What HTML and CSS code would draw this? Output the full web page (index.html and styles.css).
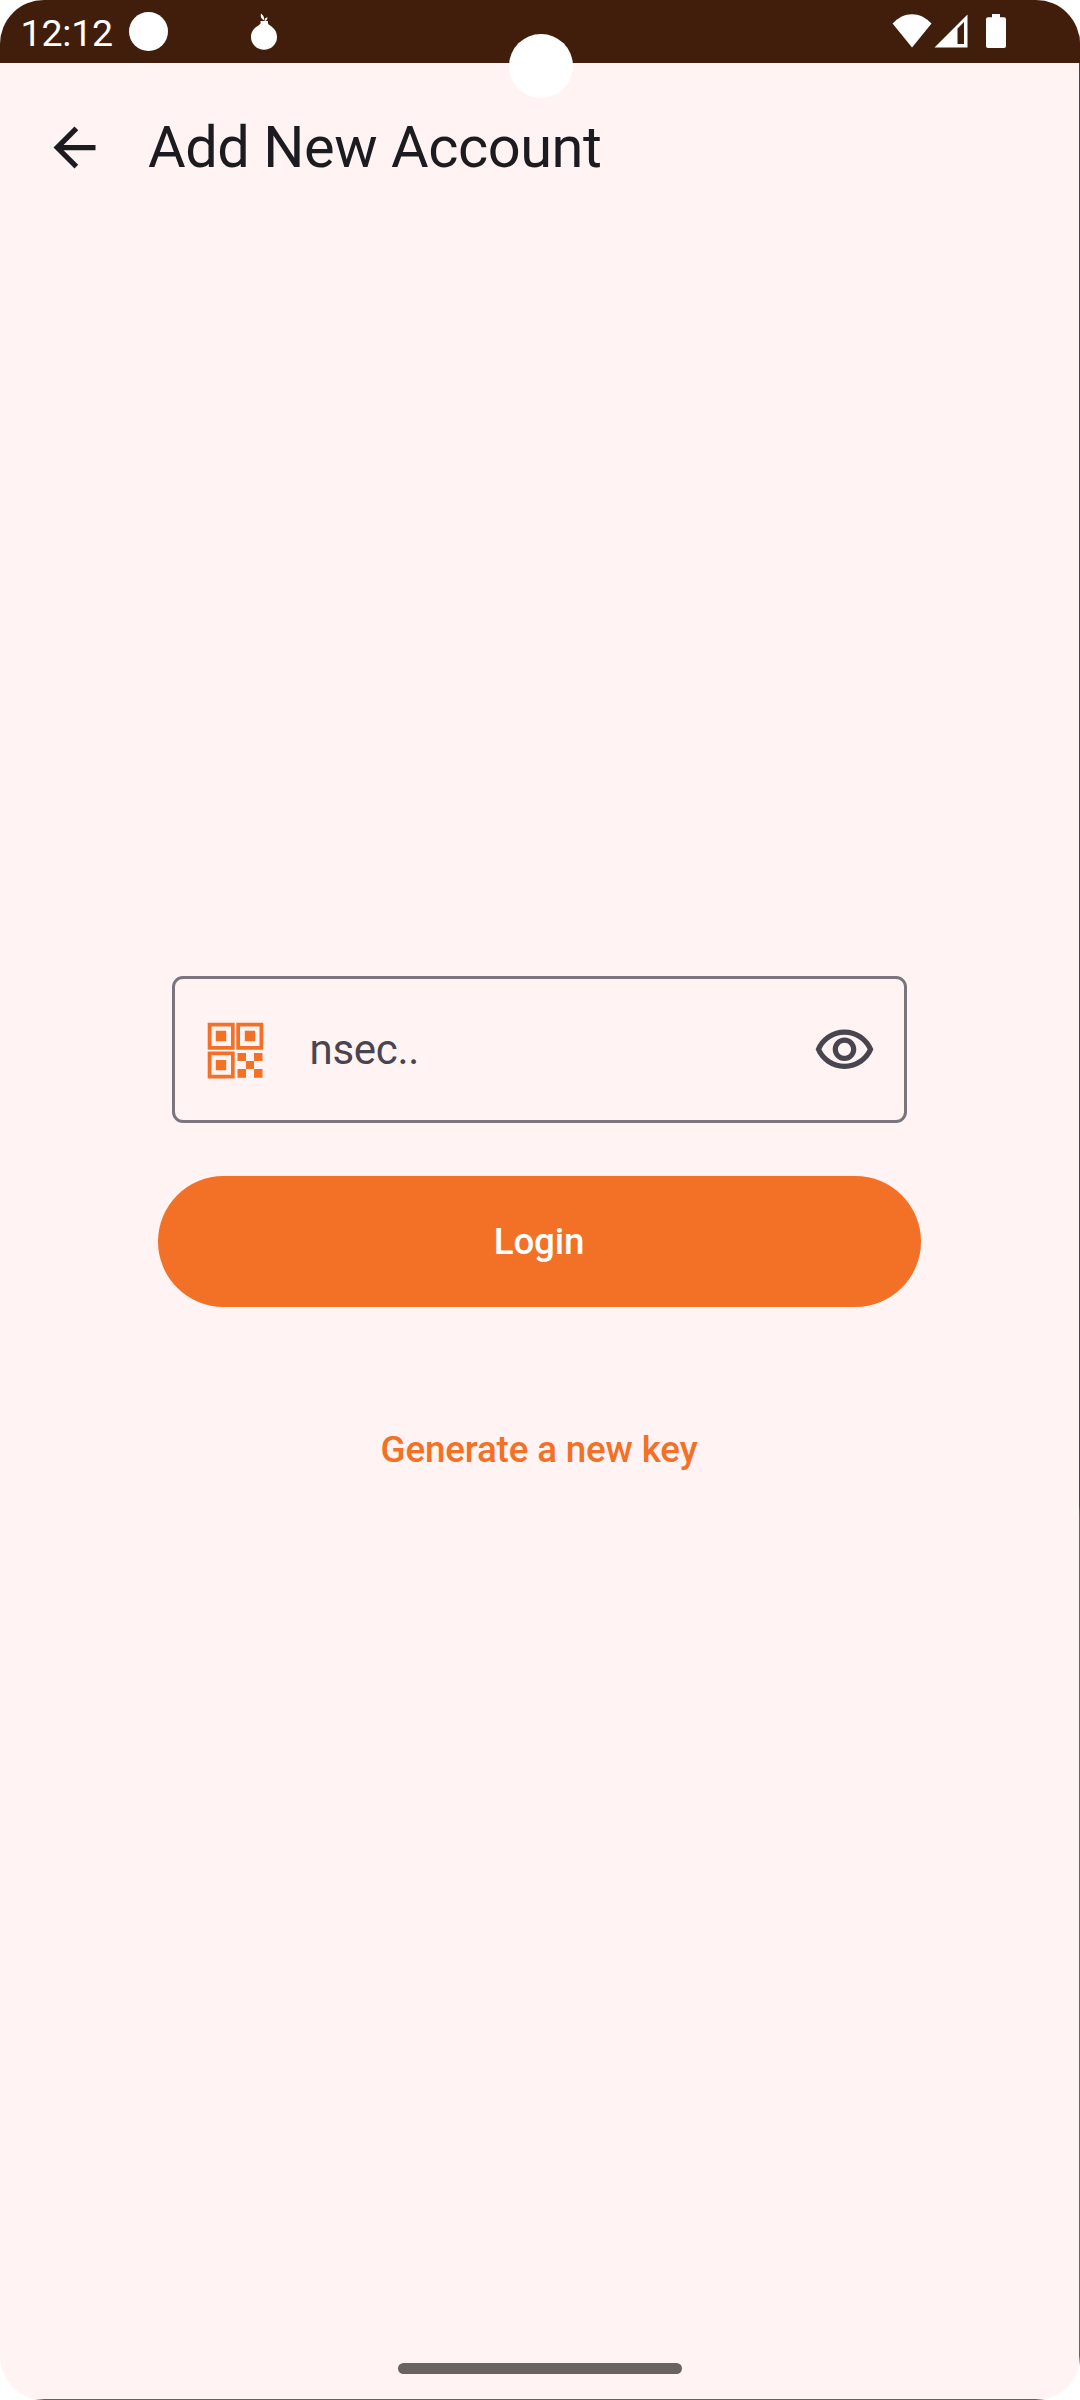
FILE: index.html
```html
<!DOCTYPE html>
<html lang="en">
<head>
<meta charset="utf-8">
<title>Add New Account</title>
<link rel="stylesheet" href="styles.css">
</head>
<body>
<div class="screen">
  <header class="status-bar">
    <span class="clock">12:12</span>
    <span class="status-dot"></span>
    <svg class="status-onion" viewBox="0 0 28 38" width="28" height="38"><path d="M10.500 8H18V10.500C19 13 27 14.500 27 24A13 12.700 0 0 1 1 24C1 14.500 9.500 13 10.500 10.500Z"/><path d="M13.500 7C10.500 5 10.500 3 11 .500C13.500 2.500 14.500 4.500 14 7ZM14.500 7.500C14.500 5.500 15.500 4.700 17.500 4.200C17.500 6 16.500 7.500 15 8Z"/></svg>
    <div class="status-right">
      <svg class="wifi" viewBox="0 0 40 34" width="40" height="34"><path d="M.500 9.500C12-3 28-3 39.500 9.500L20 33.500Z"/></svg>
      <svg class="signal" viewBox="0 0 34 34" width="34" height="34"><path fill-rule="evenodd" d="M.500 33.500 33.500.500V33.500ZM23.500 14.500V30H30V8Z"/></svg>
      <svg class="battery" viewBox="0 0 20 34" width="20" height="34"><path d="M6 0H14V3.300H18A2 2 0 0 1 20 5.300V32A2 2 0 0 1 18 34H2A2 2 0 0 1 0 32V5.300A2 2 0 0 1 2 3.300H6Z"/></svg>
    </div>
  </header>
  <div class="app-bar">
    <svg class="back" viewBox="0 0 24 24" width="63" height="63"><path d="M20 11H7.830l5.590-5.590L12 4l-8 8 8 8 1.410-1.410L7.830 13H20v-2z"/></svg>
    <h1 class="title">Add New Account</h1>
  </div>
  <main class="content">
    <div class="key-field">
      <svg class="qr" viewBox="0 0 57 57" width="57" height="57">
        <path fill-rule="evenodd" d="M.700 .700H27.700V27.700H.700ZM4.500 4.500V24H24V4.500ZM29.300 .700H56.300V27.700H29.300ZM33 4.500V24H52.500V4.500ZM.700 29.500H27.700V56.500H.700ZM4.500 33.300V52.800H24V33.300Z"/>
        <path d="M8.800 8.800H19.200V19.200H8.800ZM37.800 8.800H48.200V19.200H37.800ZM8.800 38H19.200V48.200H8.800ZM30.500 31H39V39H30.500ZM47 31H55.500V39H47ZM39 39H47V47H39ZM30.500 47H39V55.700H30.500ZM47 47H55.500V55.700H47Z"/>
      </svg>
      <span class="placeholder">nsec..</span>
      <svg class="eye" viewBox="0 0 24 24" width="63" height="63"><path d="M12 6c3.790 0 7.170 2.130 8.820 5.500C19.170 14.870 15.790 17 12 17s-7.170-2.130-8.820-5.500C4.830 8.130 8.210 6 12 6m0-2C7 4 2.730 7.110 1 11.500 2.730 15.890 7 19 12 19s9.270-3.110 11-7.500C21.270 7.110 17 4 12 4zm0 5c1.380 0 2.500 1.120 2.500 2.500S13.380 14 12 14s-2.500-1.120-2.500-2.500S10.620 9 12 9m0-2c-2.480 0-4.500 2.020-4.500 4.500S9.520 16 12 16s4.500-2.020 4.500-4.500S14.480 7 12 7z"/></svg>
    </div>
    <button class="login">Login</button>
    <button class="generate">Generate a new key</button>
  </main>
  <div class="nav-handle"></div>
  <div class="camera"></div>
</div>
</body>
</html>
```
FILE: styles.css
```css
body {
  margin: 0;
  background: #fff;
  font-family: Roboto, sans-serif;
}
.screen {
  position: relative;
  box-sizing: border-box;
  width: 1080px;
  height: 2400px;
  display: flex;
  flex-direction: column;
  border-radius: 44px;
  overflow: hidden;
  background:
    linear-gradient(#686361, #686361) left bottom / 100% 1px no-repeat,
    linear-gradient(#49454f 1505px, #686361 1515px) right top / 1px 100% no-repeat,
    #fff4f3;
}
.status-bar {
  flex: none;
  display: flex;
  height: 63px;
  background: #411d0b;
  color: #fff;
  fill: #fff;
}
.clock {
  width: 108px;
  padding-left: 20.500px;
  font-size: 37.500px;
  letter-spacing: -0.200px;
  line-height: 66px;
}
.status-dot {
  width: 39px;
  height: 39px;
  margin-top: 12px;
  border-radius: 50%;
  background: #fff;
}
.status-onion {
  margin: 13px 0 0 82.500px;
}
.status-right {
  display: flex;
  margin: 14px 74px 0 auto;
}
.signal {
  margin-left: 2px;
}
.battery {
  margin-left: 18px;
}
.app-bar {
  flex: none;
  display: flex;
  align-items: center;
  height: 168px;
  padding-left: 43px;
  gap: 42px;
  color: #1c1b1f;
}
.back {
  fill: #1c1b1f;
}
.title {
  margin: 0;
  font-size: 57.750px;
  font-weight: 400;
  letter-spacing: -0.460px;
}
.content {
  flex: 1;
  display: flex;
  flex-direction: column;
  align-items: center;
  padding: 745px 2px 0 0;
}
.key-field {
  box-sizing: border-box;
  display: flex;
  align-items: center;
  width: 735px;
  height: 147px;
  border: 3px solid #79747e;
  border-radius: 11px;
  padding: 0 28px 0 32px;
}
.qr {
  margin-top: 2px;
  fill: #f37027;
}
.placeholder {
  flex: 1;
  padding-left: 46px;
  font-size: 42px;
  letter-spacing: -0.300px;
  color: #49454f;
}
.eye {
  margin-top: 2px;
  fill: #49454f;
}
button {
  border: 0;
  padding: 0;
  background: none;
  font: 500 36.750px Roboto, sans-serif;
  letter-spacing: -0.160px;
}
.login {
  width: 763px;
  height: 131px;
  margin-top: 53px;
  border-radius: 66px;
  background: #f37027;
  color: #fff;
}
.generate {
  height: 105px;
  margin-top: 90px;
  color: #f37027;
}
.nav-handle {
  flex: none;
  align-self: center;
  width: 284px;
  height: 11px;
  margin-bottom: 26px;
  border-radius: 6px;
  background: #686361;
}
/* Front camera cutout over the status bar */
.camera {
  position: absolute;
  left: 509px;
  top: 34px;
  width: 64px;
  height: 64px;
  border-radius: 50%;
  background: #fff;
}
```
